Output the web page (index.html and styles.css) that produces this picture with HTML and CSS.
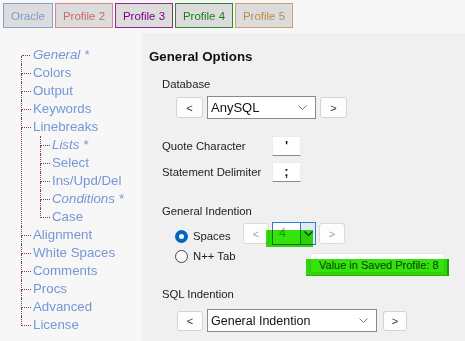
FILE: index.html
```html
<!DOCTYPE html>
<html lang="en">
<head>
    <meta charset="UTF-8">
    <title>Options</title>
    <link rel="stylesheet" href="styles.css">
</head>
<body>

<div class="tabs">
    <div class="tab tab-oracle">Oracle</div>
    <div class="tab tab-p2">Profile 2</div>
    <div class="tab tab-p3">Profile 3</div>
    <div class="tab tab-p4">Profile 4</div>
    <div class="tab tab-p5">Profile 5</div>
</div>

<div class="main">
    <ul class="tree">
        <li class="mod">General *</li>
        <li>Colors</li>
        <li>Output</li>
        <li>Keywords</li>
        <li>Linebreaks
            <ul>
                <li class="mod">Lists *</li>
                <li>Select</li>
                <li>Ins/Upd/Del</li>
                <li class="mod">Conditions *</li>
                <li>Case</li>
            </ul>
        </li>
        <li>Alignment</li>
        <li>White Spaces</li>
        <li>Comments</li>
        <li>Procs</li>
        <li>Advanced</li>
        <li>License</li>
    </ul>

    <div class="panel">
        <h2 class="title">General Options</h2>
        <div class="section">
            <div class="label db-label">Database</div>
            <div class="picker db-picker">
                <button class="step">&lt;</button>
                <div class="combo db-combo">
                    <span>AnySQL</span>
                    <svg class="chev" width="9" height="6" viewBox="0 0 9 6"><polyline points="0.5,0.5 4.5,4.5 8.5,0.5" fill="none" stroke="#777" stroke-width="1"/></svg>
                </div>
                <button class="step">&gt;</button>
            </div>

            <div class="fields">
                <div class="field">
                    <span class="label">Quote Character</span>
                    <span class="char-box">'</span>
                </div>
                <div class="field">
                    <span class="label">Statement Delimiter</span>
                    <span class="char-box">;</span>
                </div>
            </div>

            <div class="label indent-label">General Indention</div>
            <div class="indent">
                <div class="radios">
                    <div class="radio"><span class="dot checked"></span>Spaces</div>
                    <div class="radio"><span class="dot"></span>N++ Tab</div>
                </div>
                <div class="spinner">
                    <button class="step dim">&lt;</button>
                    <div class="num-combo">
                        <span class="num">4</span>
                        <span class="drop">
                            <svg width="9" height="6" viewBox="0 0 9 6"><polyline points="0.5,0.5 4.5,4.5 8.5,0.5" fill="none" stroke="#333" stroke-width="1.2"/></svg>
                        </span>
                    </div>
                    <button class="step dim">&gt;</button>
                    <span class="marker marker-num"></span>
                    <div class="tooltip">Value in Saved Profile: 8<span class="marker marker-tip"></span></div>
                </div>
            </div>

            <div class="label sql-label">SQL Indention</div>
            <div class="picker sql-picker">
                <button class="step">&lt;</button>
                <div class="combo sql-combo">
                    <span>General Indention</span>
                    <svg class="chev" width="9" height="6" viewBox="0 0 9 6"><polyline points="0.5,0.5 4.5,4.5 8.5,0.5" fill="none" stroke="#777" stroke-width="1"/></svg>
                </div>
                <button class="step">&gt;</button>
            </div>
        </div>
    </div>
</div>

</body>
</html>
```

FILE: styles.css
```css
body {
    margin: 0;
    font-family: 'Liberation Sans', Arial, sans-serif;
    background-color: #f7f7f7;
    width: 465px;
    height: 341px;
    overflow: hidden;
}
.tabs {
    display: flex;
    gap: 2px;
    padding: 3px 0 0 3px;
    height: 25px;
}
.tab {
    box-sizing: border-box;
    height: 25px;
    width: 58px;
    border: 1px solid;
    background-color: #dcdcdc;
    font-size: 11.5px;
    display: flex;
    align-items: center;
    justify-content: center;
}
.tab-oracle {
    width: 50px;
    color: #7b9ad3;
    border-color: #86a2d0;
}
.tab-p2 {
    color: #c96a6a;
    border-color: #d08c8c;
}
.tab-p3 {
    color: #800080;
    border-color: #8e2a8e;
}
.tab-p4 {
    color: #1e7e1e;
    border-color: #2e8a2e;
}
.tab-p5 {
    color: #b98d48;
    border-color: #caa464;
}
.main {
    display: flex;
    margin-top: 5px;
    height: 308px;
}

/* tree */
.tree {
    width: 142px;
    flex: none;
    box-sizing: border-box;
    margin: 0;
    padding: 13px 0 0 21px;
    list-style: none;
    font-size: 13.3px;
    color: #7597d4;
}
.tree ul {
    list-style: none;
    margin: 0 0 0 7px;
    padding: 0;
}
.tree li {
    position: relative;
    padding-left: 12px;
    line-height: 18px;
    white-space: nowrap;
}
.tree li::before {
    content: '';
    position: absolute;
    left: 0;
    top: 0;
    width: 9px;
    height: 9px;
    border-left: 1px dotted #8f3a3a;
    border-bottom: 1px dotted #8f3a3a;
}
.tree li::after {
    content: '';
    position: absolute;
    left: 0;
    top: 10px;
    bottom: 0;
    border-left: 1px dotted #8f3a3a;
}
.tree > li:first-child::before {
    border-left: none;
    left: 1px;
    width: 8px;
}
.tree li:last-child::after {
    display: none;
}
.tree .mod {
    font-style: italic;
}

/* options panel */
.panel {
    flex: 1;
    background-color: #f0f0f0;
    padding: 16px 0 0 7px;
    color: #1a1a1a;
}
.title {
    margin: 0;
    font-size: 13.3px;
    line-height: 16px;
    font-weight: bold;
    color: #111;
}
.section {
    margin-left: 13px;
}
.label {
    font-size: 11.3px;
    line-height: 14px;
    color: #222;
}
.db-label {
    margin-top: 12px;
}
.picker {
    display: flex;
    align-items: center;
    gap: 4px;
    margin-left: 14px;
}
.db-picker {
    margin-top: 5px;
}
.step {
    box-sizing: border-box;
    width: 27px;
    height: 21px;
    padding: 0;
    border: 1px solid #d3d3d3;
    border-radius: 3px;
    background-color: #fdfdfd;
    font-family: 'Liberation Sans', Arial, sans-serif;
    font-size: 11px;
    color: #333;
}
.step.dim {
    color: #8ea3c2;
    border-color: #dadada;
}
.combo {
    box-sizing: border-box;
    height: 23px;
    display: flex;
    align-items: center;
    justify-content: space-between;
    padding: 0 8px 0 3px;
    background-color: #fff;
    border: 1px solid #8a8a8a;
    font-size: 13px;
    color: #111;
}
.db-combo {
    width: 109px;
}
.sql-combo {
    width: 170px;
    font-size: 12.5px;
}
.fields {
    margin-top: 17px;
    display: flex;
    flex-direction: column;
    gap: 6px;
}
.field {
    display: flex;
    align-items: center;
}
.field .label {
    width: 110px;
}
.char-box {
    box-sizing: border-box;
    width: 29px;
    height: 20px;
    background-color: #fff;
    border: 1px solid #ececec;
    border-bottom-color: #8a8a8a;
    text-align: center;
    font-size: 13px;
    font-weight: bold;
    line-height: 18px;
    color: #111;
}
.indent-label {
    margin-top: 22px;
}
.indent {
    display: flex;
    margin-top: 4px;
}
.radios {
    width: 68px;
    margin-left: 13px;
    margin-top: 4px;
}
.radio {
    display: flex;
    align-items: center;
    gap: 5px;
    height: 20px;
    font-size: 11.3px;
    color: #222;
}
.dot {
    box-sizing: border-box;
    width: 13px;
    height: 13px;
    border-radius: 50%;
    border: 1px solid #444;
    background-color: #fafafa;
}
.dot.checked {
    border: 4px solid #0067c0;
    background-color: #fff;
}
.spinner {
    position: relative;
    display: flex;
    align-items: center;
    gap: 3px;
    height: 23px;
}
.spinner .step {
    width: 26px;
}
.num-combo {
    box-sizing: border-box;
    width: 44px;
    height: 23px;
    display: flex;
    border: 1px solid #2f7fc6;
    background-color: #fff;
}
.num {
    flex: 1;
    padding-left: 6px;
    font-size: 12.5px;
    line-height: 21px;
    color: #9aa;
}
.drop {
    width: 14px;
    border-left: 1px solid #2f7fc6;
    background-color: #dcebf8;
    display: flex;
    align-items: center;
    justify-content: center;
}
.marker {
    position: absolute;
    background-color: #33e30c;
    mix-blend-mode: multiply;
}
.marker-num {
    left: 23px;
    top: 8px;
    width: 47px;
    height: 17px;
}
.tooltip {
    position: absolute;
    left: 67px;
    top: 31px;
    width: 135px;
    height: 20px;
    box-sizing: border-box;
    background-color: #fff;
    border: 1px solid #e6e6e6;
    border-radius: 3px;
    font-size: 11px;
    line-height: 22px;
    padding-left: 8px;
    color: #444;
    white-space: nowrap;
}
.marker-tip {
    left: -5px;
    top: 5px;
    width: 141px;
    height: 16px;
    border-right: 2px solid #1faa00;
    border-bottom: 1px solid #28c000;
}
.sql-label {
    margin-top: 21px;
}
.sql-picker {
    margin-top: 8px;
    margin-left: 15px;
}
.sql-picker .step {
    width: 26px;
    height: 20px;
}
.sql-picker .step:last-child {
    width: 24px;
    margin-left: 2px;
}
```
